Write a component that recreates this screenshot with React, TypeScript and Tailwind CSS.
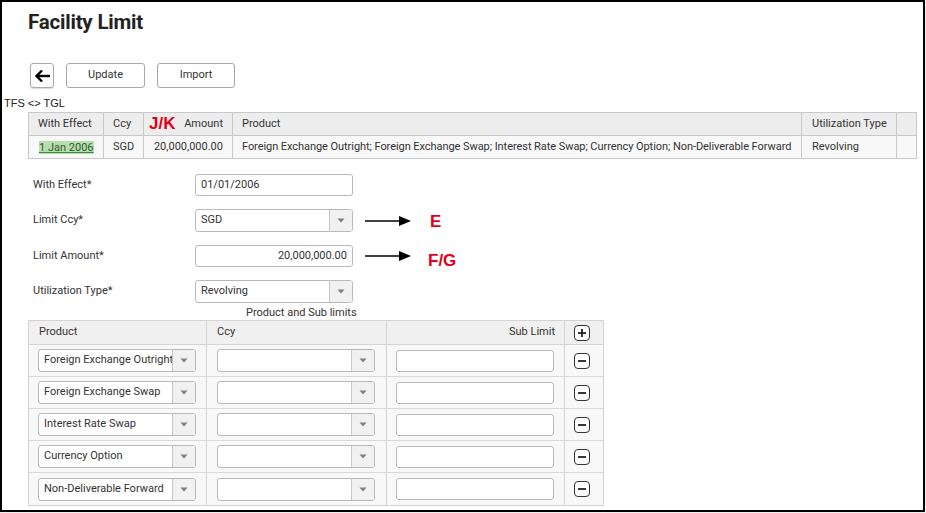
import React from "react";

const Caret = () => (
  <svg width="8" height="5" viewBox="0 0 8 5">
    <path d="M0.5 0.5 L7.5 0.5 L4 4.5 Z" fill="#7a7f86" />
  </svg>
);

const Select = ({ value, w = "w-[158px]" }: { value: string; w?: string }) => (
  <div className={`${w} h-[23px] flex border border-[#b9b9b9] rounded-[3px] bg-white overflow-hidden`}>
    <div className="flex-1 min-w-0 flex items-center pl-[5px] text-[11px] text-[#333] whitespace-nowrap overflow-hidden">{value}</div>
    <div className="w-[23px] flex items-center justify-center border-l border-[#c8c8c8] bg-[#f1f1f1]">
      <Caret />
    </div>
  </div>
);

const Input = ({ value = "", right = false }: { value?: string; right?: boolean }) => (
  <div
    className={`w-[158px] h-[22px] flex items-center border border-[#b9b9b9] rounded-[3px] bg-white text-[11px] text-[#333] px-[5px] ${
      right ? "justify-end" : ""
    }`}
  >
    {value}
  </div>
);

const Arrow = () => (
  <svg width="48" height="12" viewBox="0 0 48 12">
    <line x1="0" y1="6" x2="36" y2="6" stroke="#000" strokeWidth="1.5" />
    <path d="M34 1 L46 6 L34 11 Z" fill="#000" />
  </svg>
);

const SquareBtn = ({ plus = false }: { plus?: boolean }) => (
  <div className="w-[16px] h-[16px] border-[1.5px] border-[#333] rounded-[4px] flex items-center justify-center bg-white">
    <svg width="10" height="10" viewBox="0 0 10 10">
      <line x1="1" y1="5" x2="9" y2="5" stroke="#222" strokeWidth="1.8" />
      {plus && <line x1="5" y1="1" x2="5" y2="9" stroke="#222" strokeWidth="1.8" />}
    </svg>
  </div>
);

const products = [
  "Foreign Exchange Outright",
  "Foreign Exchange Swap",
  "Interest Rate Swap",
  "Currency Option",
  "Non-Deliverable Forward",
];

export default function App() {
  return (
    <div className="w-[926px] h-[513px] bg-[#efefef] font-['Roboto',sans-serif] text-[#333]">
      <div className="w-[925px] h-[512px] border-2 border-black bg-white flex flex-col">
        <div className="ml-[26px] mt-[6px] h-[28px] text-[20.5px] font-bold text-[#222] leading-[28px] tracking-[-0.2px]">
          Facility Limit
        </div>
        <div className="ml-[28px] mt-[27px] flex gap-[12px]">
          <div className="w-[24px] h-[25px] border border-[#a9a9a9] rounded-[3px] flex items-center justify-center shadow-[0_1px_1px_rgba(0,0,0,0.15)]">
            <svg width="17" height="14" viewBox="0 0 17 14">
              <path d="M16 7 H2.5" stroke="#000" strokeWidth="2.4" />
              <path d="M8 1.5 L2.5 7 L8 12.5" stroke="#000" strokeWidth="2.4" fill="none" />
            </svg>
          </div>
          <div className="w-[79px] h-[25px] border border-[#a9a9a9] rounded-[3px] flex items-center justify-center text-[11px] text-[#333]">
            Update
          </div>
          <div className="w-[78px] h-[25px] border border-[#a9a9a9] rounded-[3px] flex items-center justify-center text-[11px] text-[#333]">
            Import
          </div>
        </div>
        <div className="ml-[2px] mt-[8px] h-[14px] leading-[14px] text-[11px] font-['Liberation_Sans',sans-serif] text-[#222]">
          TFS &lt;&gt; TGL
        </div>
        <div className="ml-[26px] mt-[2px] w-[889px] border border-[#c9c9c9] text-[11px]">
          <div className="flex h-[23px] bg-[#ededed] border-b border-[#c9c9c9]">
            <div className="w-[75px] pl-[9px] flex items-center border-r border-[#c9c9c9]">With Effect</div>
            <div className="w-[40px] pl-[9px] flex items-center border-r border-[#c9c9c9]">Ccy</div>
            <div className="w-[89px] pr-[9px] flex items-center justify-end border-r border-[#c9c9c9] relative">
              <span className="absolute left-[5px] top-[-2px] text-[17px] font-bold text-[#e3001b] font-['Liberation_Sans',sans-serif]">
                J/K
              </span>
              Amount
            </div>
            <div className="w-[569px] pl-[9px] flex items-center border-r border-[#c9c9c9]">Product</div>
            <div className="w-[95px] pl-[10px] flex items-center border-r border-[#c9c9c9]">Utilization Type</div>
            <div className="flex-1" />
          </div>
          <div className="flex h-[22px] bg-[#f8f8f8]">
            <div className="w-[75px] pl-[10px] flex items-center border-r border-[#c9c9c9]">
              <span className="bg-[#b8deb0] text-[#2d5a2d] underline decoration-[#3d8a3d] leading-[13px]">1 Jan 2006</span>
            </div>
            <div className="w-[40px] pl-[9px] flex items-center border-r border-[#c9c9c9]">SGD</div>
            <div className="w-[89px] pr-[9px] flex items-center justify-end border-r border-[#c9c9c9]">20,000,000.00</div>
            <div className="w-[569px] pl-[9px] flex items-center border-r border-[#c9c9c9] whitespace-nowrap tracking-[-0.06px]">
              Foreign Exchange Outright; Foreign Exchange Swap; Interest Rate Swap; Currency Option; Non-Deliverable Forward
            </div>
            <div className="w-[95px] pl-[10px] flex items-center border-r border-[#c9c9c9]">Revolving</div>
            <div className="flex-1" />
          </div>
        </div>

        <div className="ml-[31px] mt-[15px] flex flex-col gap-[13px] text-[11px]">
          <div className="flex items-center h-[22px]">
            <div className="w-[162px]">With Effect*</div>
            <Input value="01/01/2006" />
          </div>
          <div className="flex items-center h-[23px]">
            <div className="w-[162px]">Limit Ccy*</div>
            <Select value="SGD" />
            <div className="ml-[12px]"><Arrow /></div>
            <div className="ml-[17px] text-[17px] font-bold text-[#e3001b] font-['Liberation_Sans',sans-serif] leading-[20px] mt-[2px]">E</div>
          </div>
          <div className="flex items-center h-[22px]">
            <div className="w-[162px]">Limit Amount*</div>
            <Input value="20,000,000.00" right />
            <div className="ml-[12px]"><Arrow /></div>
            <div className="ml-[15px] text-[17px] font-bold text-[#e3001b] font-['Liberation_Sans',sans-serif] leading-[20px] mt-[10px]">F/G</div>
          </div>
          <div className="flex items-center h-[23px]">
            <div className="w-[162px]">Utilization Type*</div>
            <Select value="Revolving" />
          </div>
        </div>

        <div className="ml-[244px] mt-[3px] h-[14px] leading-[14px] text-[11px]">Product and Sub limits</div>
        <div className="ml-[26px] mt-0 w-[576px] border border-[#d4d4d4] text-[11px]">
          <div className="flex h-[24px] bg-[#f0f0f0] border-b border-[#d4d4d4]">
            <div className="w-[178px] pl-[10px] flex items-center border-r border-[#d4d4d4]">Product</div>
            <div className="w-[180px] pl-[10px] flex items-center border-r border-[#d4d4d4]">Ccy</div>
            <div className="w-[178px] pr-[9px] flex items-center justify-end border-r border-[#d4d4d4]">Sub Limit</div>
            <div className="flex-1 flex items-center pl-[9px]">
              <SquareBtn plus />
            </div>
          </div>
          {products.map((p, i) => (
            <div key={p} className={`flex h-[32px] bg-[#f8f8f8] ${i < products.length - 1 ? "border-b border-[#d9d9d9]" : ""}`}>
              <div className="w-[178px] pl-[9px] flex items-center border-r border-[#d4d4d4]">
                <Select value={p} />
              </div>
              <div className="w-[180px] pl-[10px] flex items-center border-r border-[#d4d4d4]">
                <Select value="" />
              </div>
              <div className="w-[178px] pl-[9px] flex items-center border-r border-[#d4d4d4]">
                <Input />
              </div>
              <div className="flex-1 flex items-center pl-[9px]">
                <SquareBtn />
              </div>
            </div>
          ))}
        </div>
      </div>
    </div>
  );
}
